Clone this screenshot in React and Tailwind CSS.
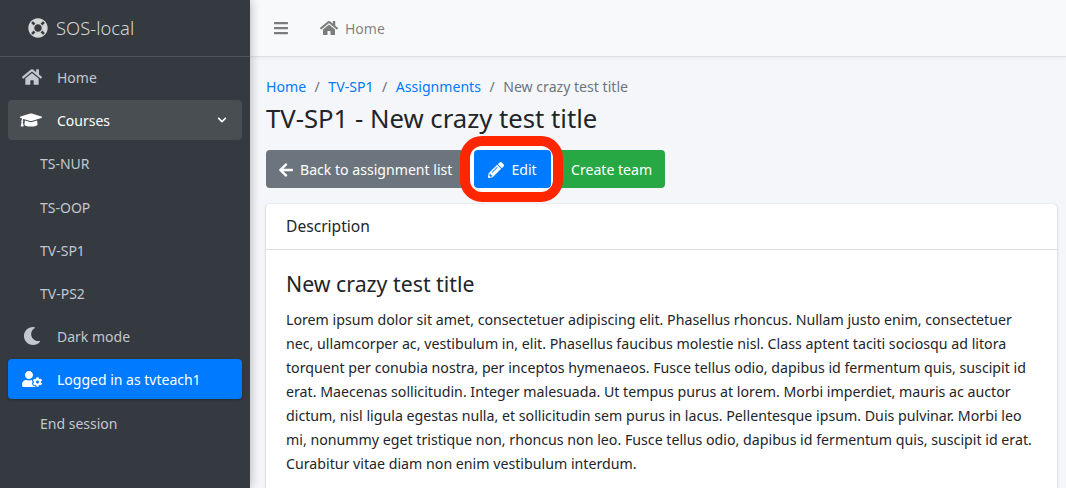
import { FaHome, FaGraduationCap, FaChevronDown, FaLifeRing, FaMoon, FaUserCog, FaBars, FaArrowLeft, FaPencilAlt } from 'react-icons/fa'

const courses = ['TS-NUR', 'TS-OOP', 'TV-SP1', 'TV-PS2']

const lines = [
  'Lorem ipsum dolor sit amet, consectetuer adipiscing elit. Phasellus rhoncus. Nullam justo enim, consectetuer',
  'nec, ullamcorper ac, vestibulum in, elit. Phasellus faucibus molestie nisl. Class aptent taciti sociosqu ad litora',
  'torquent per conubia nostra, per inceptos hymenaeos. Fusce tellus odio, dapibus id fermentum quis, suscipit id',
  'erat. Maecenas sollicitudin. Integer malesuada. Ut tempus purus at lorem. Morbi imperdiet, mauris ac auctor',
  'dictum, nisl ligula egestas nulla, et sollicitudin sem purus in lacus. Pellentesque ipsum. Duis pulvinar. Morbi leo',
  'mi, nonummy eget tristique non, rhoncus non leo. Fusce tellus odio, dapibus id fermentum quis, suscipit id erat.',
  'Curabitur vitae diam non enim vestibulum interdum.',
]

function NavItem({ icon: Icon, label, className = 'text-[#c2c7d0]', iconSize = 20 }) {
  return (
    <div className={`flex items-center h-10 mb-[3.2px] mx-2 px-[12px] rounded ${className}`}>
      <span className="w-[25px] flex justify-center -ml-[1px] mr-[13px]"><Icon size={iconSize} /></span>
      <span>{label}</span>
    </div>
  )
}

function Sidebar() {
  return (
    <aside className="w-[250px] h-[488px] shrink-0 bg-[#343a40] text-[14px] shadow-[0_0_10px_rgba(0,0,0,0.3)] z-10 overflow-hidden">
      <div className="h-[57px] flex items-center pl-[28px] border-b border-[#4b545c] text-[#d4d6d8] text-[18.4px] font-light">
        <FaLifeRing size={20} className="mr-[8px]" />
        <span>SOS-local</span>
      </div>
      <nav>
        <NavItem icon={FaHome} label="Home" />
        <div className="flex items-center h-10 mb-[3.2px] mx-2 px-[12px] rounded bg-[#494e53] text-white">
          <span className="w-[25px] flex justify-center -ml-[2px] mr-[14px]"><FaGraduationCap size={22} /></span>
          <span>Courses</span>
          <FaChevronDown size={10} className="ml-auto mr-[3px]" />
        </div>
        {courses.map((c) => (
          <div key={c} className="flex items-center h-10 mb-[3.2px] pt-[1px] pl-[40px] text-[#c2c7d0]">{c}</div>
        ))}
        <NavItem icon={FaMoon} label="Dark mode" iconSize={18} />
        <NavItem icon={FaUserCog} label="Logged in as tvteach1" iconSize={20} className="bg-[#007bff] text-white shadow-[0_1px_3px_rgba(0,0,0,0.25)]" />
        <div className="flex items-center h-10 mb-[3.2px] pt-[1px] pl-[40px] text-[#c2c7d0]">End session</div>
      </nav>
    </aside>
  )
}

function TopBar() {
  return (
    <header className="h-[57px] shrink-0 flex items-center bg-[#f8f9fa] border-b border-[#dee2e6] shadow-[0_1px_4px_rgba(0,0,0,0.06)] text-[rgba(0,0,0,0.5)] text-[14px]">
      <FaBars size={16} className="ml-[23px]" />
      <FaHome size={18} className="ml-[31px] mr-[7px]" />
      <span>Home</span>
    </header>
  )
}

function Main() {
  return (
    <main className="flex-1 min-w-0 h-[488px] flex flex-col overflow-hidden bg-[#f4f6f9]">
      <TopBar />
      <div className="pl-[16px] pr-[9px] text-[#212529]">
        <div className="flex items-center h-6 mt-[18px] text-[14.1px] text-[#6c757d]">
          <span className="text-[#007bff]">Home</span>
          <span className="mx-[8.5px]">/</span>
          <span className="text-[#007bff]">TV-SP1</span>
          <span className="mx-[8.5px]">/</span>
          <span className="text-[#007bff]">Assignments</span>
          <span className="mx-[8.5px]">/</span>
          <span>New crazy test title</span>
        </div>
        <h1 className="text-[25.7px] leading-[31px] mt-[4px] mb-[16px]">TV-SP1 - New crazy test title</h1>
        <div className="flex items-start h-[38px] text-[14.1px] text-white">
          <button className="h-[38px] w-[198px] flex items-center pl-[12px] pt-[1px] bg-[#6c757d] rounded">
            <FaArrowLeft size={16} className="mr-[6px]" />
            Back to assignment list
          </button>
          <div className="relative ml-[10px] w-[77px] h-[38px] z-10">
            <div className="absolute -left-[14px] -right-[12px] -top-[14px] -bottom-[14px] rounded-[22px] border-[10px] border-[#ff2600] bg-white" />
            <button className="absolute inset-0 flex items-center justify-center pt-[1px] bg-[#007bff] rounded">
              <FaPencilAlt size={16} className="mr-[7px]" />
              Edit
            </button>
          </div>
          <button className="h-[38px] w-[110px] ml-[4px] pl-[16px] pt-[1px] text-left bg-[#28a745] rounded">Create team</button>
        </div>
        <section className="mt-[16px] pb-[40px] bg-white rounded shadow-[0_0_1px_rgba(0,0,0,0.13),0_1px_3px_rgba(0,0,0,0.2)]">
          <div className="h-[46px] flex items-center px-[20px] border-b border-[rgba(0,0,0,0.125)] text-[15.6px]">Description</div>
          <div className="px-[20px] pt-[21px]">
            <h4 className="text-[21.3px] leading-[26px] mb-[11px]">New crazy test title</h4>
            <div className="text-[14.2px] leading-[24px] whitespace-nowrap">
              {lines.map((l) => <div key={l}>{l}</div>)}
            </div>
          </div>
        </section>
      </div>
    </main>
  )
}

export default function App() {
  return (
    <div className="flex w-[1066px] h-[488px] overflow-hidden font-['Noto_Sans','Open_Sans',sans-serif]">
      <Sidebar />
      <Main />
    </div>
  )
}
